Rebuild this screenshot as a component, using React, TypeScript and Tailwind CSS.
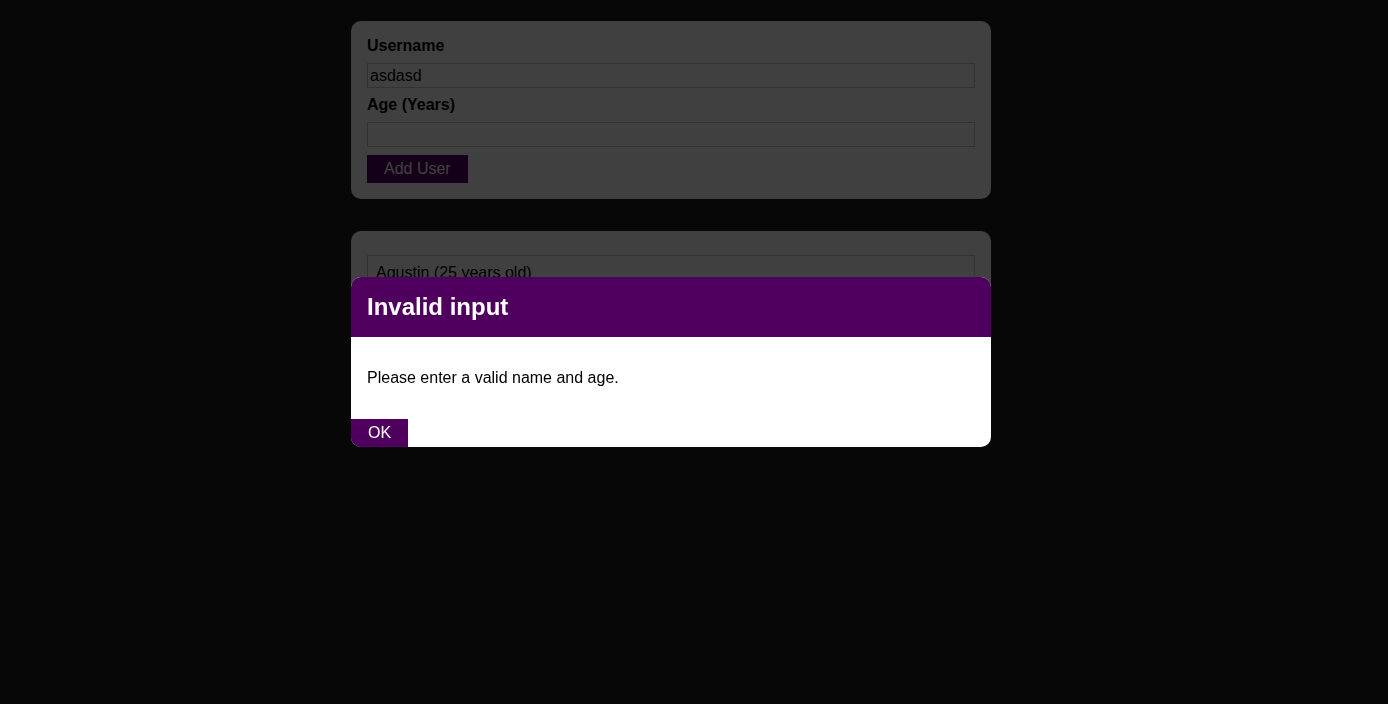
export default function App() {
  return (
    <div className="relative min-h-screen bg-[#1f1f1f] font-['Liberation_Sans',Arial,sans-serif] text-black">
      <div className="pl-[351px] pt-[21px]">
        <div className="w-[640px] rounded-[10px] bg-white p-4">
          <label className="mb-2 block text-base font-bold leading-[18px]">Username</label>
          <input
            className="mb-2 block h-[25px] w-full border border-[#ccc] px-[2px] text-base outline-none"
            defaultValue="asdasd"
          />
          <label className="mb-2 block text-base font-bold leading-[18px]">Age (Years)</label>
          <input className="mb-2 block h-[25px] w-full border border-[#ccc] px-[2px] text-base outline-none" />
          <button className="h-[28px] border border-[#4f005f] bg-[#4f005f] px-4 text-base text-white">Add User</button>
        </div>

        <div className="mt-8 w-[640px] rounded-[10px] bg-white px-4 py-6">
          <ul>
            <li className="border border-[#ccc] px-2 py-2 text-base leading-[18px]">Agustin (25 years old)</li>
          </ul>
        </div>
      </div>

      <div className="fixed inset-0 bg-black/75">
        <div className="ml-[351px] mt-[277px] w-[640px] overflow-hidden rounded-[10px] bg-white">
          <header className="bg-[#4f005f] p-4">
            <h2 className="text-2xl font-bold leading-[28px] text-white">Invalid input</h2>
          </header>
          <div className="p-4">
            <p className="my-4 text-base leading-[18px]">Please enter a valid name and age.</p>
          </div>
          <footer className="flex">
            <button className="h-[28px] border border-[#4f005f] bg-[#4f005f] px-4 text-base text-white">OK</button>
          </footer>
        </div>
      </div>
    </div>
  )
}
